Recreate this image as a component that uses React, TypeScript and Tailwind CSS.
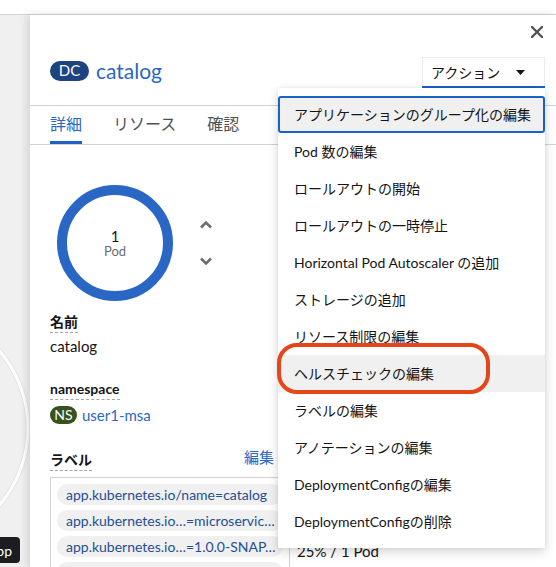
import React from 'react';

const menuItems = [
  'アプリケーションのグループ化の編集',
  'Pod 数の編集',
  'ロールアウトの開始',
  'ロールアウトの一時停止',
  'Horizontal Pod Autoscaler の追加',
  'ストレージの追加',
  'リソース制限の編集',
  'ヘルスチェックの編集',
  'ラベルの編集',
  'アノテーションの編集',
  'DeploymentConfigの編集',
  'DeploymentConfigの削除',
];

const labels = [
  'app.kubernetes.io/name=catalog',
  'app.kubernetes.io…=microservic…',
  'app.kubernetes.io…=1.0.0-SNAP…',
  'app.openshift.io/runtime=java',
];

function Term({ children }: { children: React.ReactNode }) {
  return (
    <div className="h-[22px]">
      <span className="inline-block text-[14px] font-bold leading-[21px] border-b border-dashed border-[#a5a7aa]">
        {children}
      </span>
    </div>
  );
}

function ActionsMenu() {
  return (
    <div className="relative">
      <button className="w-[123px] h-[29px] flex items-center justify-between pl-[8px] pr-[19px] border border-b-0 border-[#ececec] text-[14px] text-[#151515]">
        <span>アクション</span>
        <svg width="9" height="5" viewBox="0 0 9 5">
          <path d="M0 0h9L4.5 5z" fill="#151515" />
        </svg>
      </button>
      <div className="h-[2px] bg-[#1c62c4]" />
      <div className="absolute right-0 top-full w-[267px] bg-white py-[8px] shadow-[0_4px_10px_rgba(0,0,0,0.16),0_0_3px_rgba(0,0,0,0.08)] z-10">
        {menuItems.map((item, i) => (
          <div
            key={item}
            className={
              i === 0
                ? 'h-[37px] flex items-center px-[14px] text-[14px] whitespace-nowrap border-2 border-[#1c62c4] rounded-[3px] bg-[#f0f0f0]'
                : i === 7
                  ? 'h-[37px] flex items-center px-[16px] text-[14px] whitespace-nowrap bg-[#f0f0f0]'
                  : 'h-[37px] flex items-center px-[16px] text-[14px] whitespace-nowrap'
            }
          >
            {item}
          </div>
        ))}
        <div className="absolute left-[-1px] top-[255px] w-[213px] h-[51px] border-[4px] border-[#e4461a] rounded-[20px]" />
      </div>
    </div>
  );
}

export default function App() {
  return (
    <div className="w-[556px] h-[567px] overflow-hidden flex flex-col bg-[#f0f0f0] text-[#151515] font-['Lato','Noto_Sans_CJK_JP',sans-serif]">
      <div className="h-[15px] shrink-0 bg-white border-b border-[#d2d2d2]" />
      <div className="flex flex-1 min-h-0">
        {/* topology canvas edge */}
        <div className="w-[30px] shrink-0 relative">
          <svg width="30" height="552" className="absolute left-0 top-0">
            <circle cx="-90" cy="413" r="118" fill="none" stroke="#e4e4e4" strokeWidth="5" />
            <circle cx="-90" cy="413" r="118" fill="none" stroke="#ffffff" strokeWidth="3" />
          </svg>
          <div className="absolute left-[-30px] top-[522px] w-[50px] h-[26px] rounded-[4px] bg-[#1b1d21] text-white text-[14px] flex items-center justify-end pr-[8px]">
            app
          </div>
        </div>

        {/* side panel */}
        <div className="flex-1 bg-white relative shadow-[-3px_0_8px_rgba(0,0,0,0.12)] overflow-hidden">
          <div className="h-[42px] flex justify-end pr-[13px] pt-[11px]">
            <svg width="12" height="12" viewBox="0 0 12 12">
              <path d="M1 1l10 10M11 1L1 11" stroke="#4f5255" strokeWidth="2.4" strokeLinecap="round" />
            </svg>
          </div>
          <div className="flex items-start justify-between pl-[20px] pr-[11px]">
            <div className="flex items-center gap-[7px] mt-[3px]">
              <span className="w-[39px] h-[20px] rounded-full bg-[#1d4481] text-white text-[15px] leading-none flex items-center justify-center">
                DC
              </span>
              <span className="text-[21px] text-[#2b67c4] leading-none">catalog</span>
            </div>
            <ActionsMenu />
          </div>

          <div className="mt-[17px] h-[40px] border-y border-[#d2d2d2] flex gap-[31px] px-[20px] text-[16px]">
            <div className="h-full flex items-center border-b-[3px] border-[#1c62c4] text-[#2b67c4]">詳細</div>
            <div className="h-full flex items-center border-b-[3px] border-transparent text-[#4f5255]">リソース</div>
            <div className="h-full flex items-center border-b-[3px] border-transparent text-[#4f5255]">確認</div>
          </div>

          <div className="flex px-[20px] gap-[7px]">
            <div className="w-[240px] shrink-0">
              <div className="mt-[40px] flex items-center">
                <div className="ml-[7px] w-[116px] h-[116px] relative flex flex-col items-center justify-center">
                  <svg width="116" height="116" className="absolute inset-0">
                    <circle cx="58" cy="58" r="53" fill="none" stroke="#2a67c5" strokeWidth="10" />
                  </svg>
                  <span className="text-[15px] leading-[16px] text-[#151515]">1</span>
                  <span className="text-[13px] leading-[14px] text-[#6a6e73]">Pod</span>
                </div>
                <div className="ml-[26px] flex flex-col gap-[28px]">
                  <svg width="14" height="9" viewBox="0 0 14 9">
                    <path d="M2 7.5L7 2.5l5 5" fill="none" stroke="#6a6e73" strokeWidth="2.6" />
                  </svg>
                  <svg width="14" height="9" viewBox="0 0 14 9">
                    <path d="M2 1.5L7 6.5l5-5" fill="none" stroke="#6a6e73" strokeWidth="2.6" />
                  </svg>
                </div>
              </div>

              <div className="mt-[8px]">
                <Term>名前</Term>
                <div className="mt-[5px] text-[15px] leading-[21px]">catalog</div>
              </div>

              <div className="mt-[19px]">
                <Term>namespace</Term>
                <div className="mt-[6px] flex items-center gap-[5px]">
                  <span className="w-[27px] h-[18px] rounded-full bg-[#36521f] text-white text-[14px] leading-none flex items-center justify-center">
                    NS
                  </span>
                  <span className="text-[15px] text-[#2b67c4]">user1-msa</span>
                </div>
              </div>

              <div className="mt-[20px] flex items-start justify-between">
                <Term>ラベル</Term>
                <div className="flex items-center gap-[6px] text-[15px] text-[#2b67c4] leading-[21px]">
                  編集
                  <svg width="10" height="10" viewBox="0 0 10 10">
                    <path d="M1 9l1-3 5-5 2 2-5 5z" fill="#8a8d90" />
                  </svg>
                </div>
              </div>

              <div className="mt-[8px] border border-[#d2d2d2] p-[6px] flex flex-col gap-[5px]">
                {labels.map((l) => (
                  <div
                    key={l}
                    className="h-[21px] rounded-full bg-[#f0f0f0] px-[9px] text-[14px] leading-[21px] text-[#1f4f91] whitespace-nowrap"
                  >
                    {l}
                  </div>
                ))}
              </div>
            </div>

            <div className="pt-[55px] text-[14px] leading-[21px] whitespace-nowrap">
              {[
                ['更新ストラテジー', 'Rolling'],
                ['タイムアウト', '600 秒'],
                ['最大サージ', '25% / 1 Pod'],
                ['レイテストバージョン', '1'],
                ['メッセージ', 'config change'],
                ['最大利用不可', '25% / 1 Pod'],
              ].map(([t, d]) => (
                <div key={t} className="mb-[22px]">
                  <div className="font-bold">{t}</div>
                  <div className="text-[15px]">{d}</div>
                </div>
              ))}
            </div>
          </div>
        </div>
      </div>
    </div>
  );
}
